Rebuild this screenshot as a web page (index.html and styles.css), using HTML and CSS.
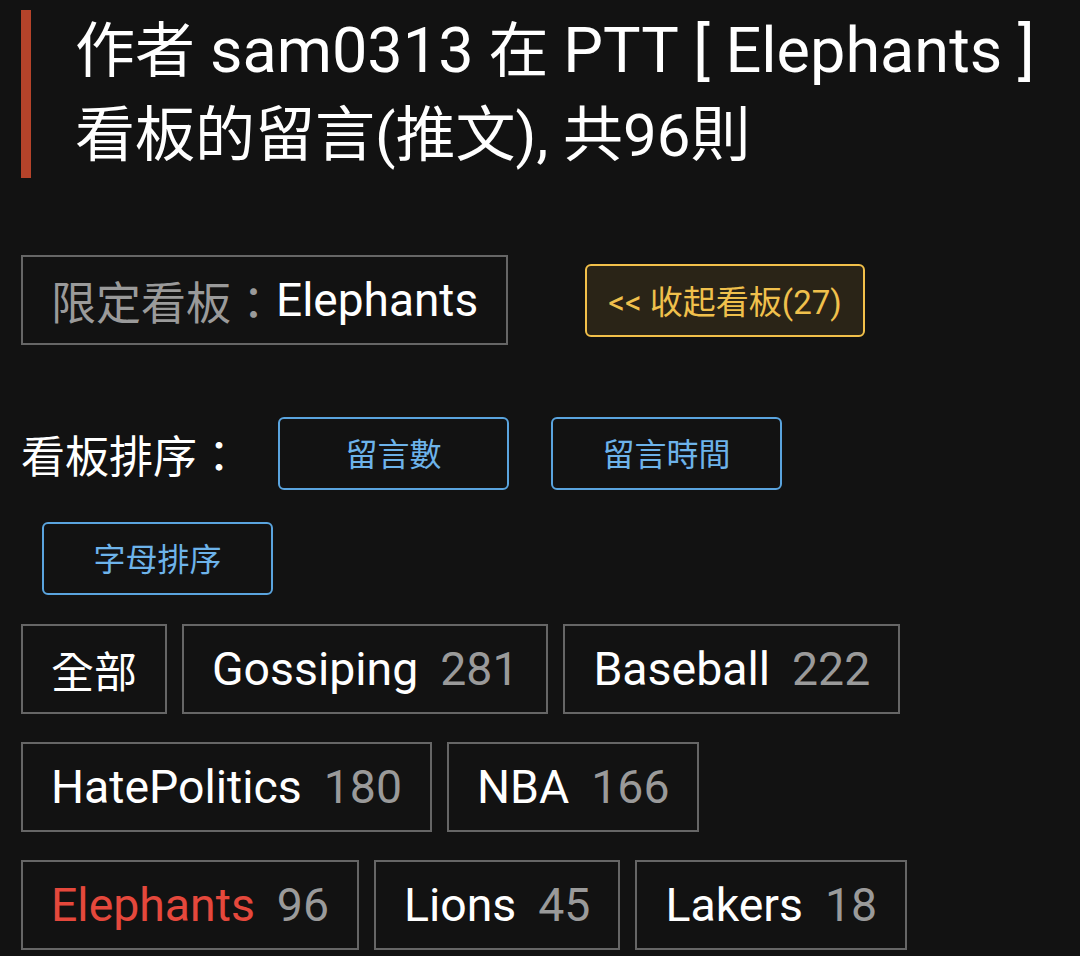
FILE: index.html
```html
<!DOCTYPE html>
<html lang="zh-Hant">
<head>
<meta charset="utf-8">
<title>sam0313 Elephants 留言</title>
<link rel="stylesheet" href="styles.css">
</head>
<body>
<main class="page">
  <h1 class="title">作者 <span class="en">sam0313</span> 在 <span class="en">PTT [ Elephants ]</span> 看板的留言(推文), 共96則</h1>

  <div class="filter-row">
    <div class="filter-box"><span class="filter-label">限定看板：</span><span class="filter-value">Elephants</span></div>
    <button class="collapse-btn">&lt;&lt; 收起看板(27)</button>
  </div>

  <div class="sort-row">
    <span class="sort-label">看板排序：</span>
    <button class="sort-btn">留言數</button>
    <button class="sort-btn">留言時間</button>
    <button class="sort-btn">字母排序</button>
  </div>

  <div class="tags">
    <a class="tag"><span class="tag-name tag-cjk">全部</span></a>
    <a class="tag"><span class="tag-name">Gossiping</span><span class="tag-count">281</span></a>
    <a class="tag"><span class="tag-name">Baseball</span><span class="tag-count">222</span></a>
    <a class="tag"><span class="tag-name">HatePolitics</span><span class="tag-count">180</span></a>
    <a class="tag"><span class="tag-name">NBA</span><span class="tag-count">166</span></a>
    <a class="tag tag-active"><span class="tag-name">Elephants</span><span class="tag-count">96</span></a>
    <a class="tag"><span class="tag-name">Lions</span><span class="tag-count">45</span></a>
    <a class="tag"><span class="tag-name">Lakers</span><span class="tag-count">18</span></a>
  </div>
</main>
</body>
</html>
```
FILE: styles.css
```css
html, body {
  margin: 0;
  background: #121212;
}

body {
  font-family: Roboto, "Noto Sans CJK TC", sans-serif;
  color: #ffffff;
}

.page {
  padding: 10px 21px 0 21px;
}

.title {
  margin: 0;
  font-weight: 400;
  font-size: 60px;
  line-height: 84px;
  border-left: 10px solid #b5432a;
  padding-left: 44px;
  color: #ffffff;
}

.title .en {
  font-size: 63px;
  line-height: 1;
}

.filter-row {
  display: flex;
  align-items: center;
  margin-top: 77px;
}

.filter-box {
  box-sizing: border-box;
  height: 90px;
  display: flex;
  align-items: center;
  padding: 0 28px;
  border: 2px solid #666666;
}

.filter-label {
  font-size: 45px;
  color: #9a9a9a;
}

.filter-value {
  font-size: 46px;
  color: #ffffff;
}

.collapse-btn {
  box-sizing: border-box;
  margin-left: 77px;
  height: 73px;
  padding: 0 21px;
  border: 2px solid #f2c04a;
  border-radius: 6px;
  background: #2a2417;
  color: #f0c04c;
  font-family: Roboto, "Noto Sans CJK TC", sans-serif;
  font-size: 33px;
}

.sort-row {
  display: flex;
  flex-wrap: wrap;
  align-items: center;
  row-gap: 32px;
  margin-top: 72px;
}

.sort-label {
  font-size: 44px;
  width: 236px;
  color: #ffffff;
}

.sort-btn {
  box-sizing: border-box;
  width: 231px;
  height: 73px;
  margin: 0 21px;
  padding: 0 0 4px 0;
  border: 2px solid #5aa4de;
  border-radius: 6px;
  background: transparent;
  color: #6db3ea;
  font-family: Roboto, "Noto Sans CJK TC", sans-serif;
  font-size: 32px;
}

.tags {
  display: flex;
  flex-wrap: wrap;
  margin-top: 29px;
}

.tag {
  box-sizing: border-box;
  display: flex;
  align-items: center;
  height: 90px;
  padding: 0 28px;
  margin: 0 15px 28px 0;
  border: 2px solid #666666;
  font-size: 46.4px;
  color: #ffffff;
}

.tag-cjk {
  font-size: 43px;
}

.tag-count {
  margin-left: 22px;
  color: #9a9a9a;
}

.tag-active .tag-name {
  color: #e5483c;
}
```
